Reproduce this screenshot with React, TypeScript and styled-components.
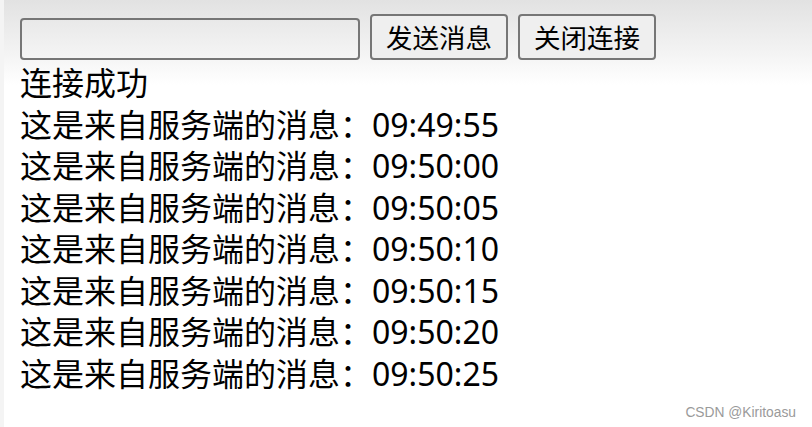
import styled, { createGlobalStyle } from 'styled-components';

const GlobalStyle = createGlobalStyle`
  html, body {
    margin: 0;
    padding: 0;
    background: #ffffff;
  }
  body {
    font-family: 'Noto Sans', 'Noto Sans CJK SC', sans-serif;
    color: #000;
  }
`;

const Page = styled.div`
  position: relative;
  width: 812px;
  height: 427px;
  box-sizing: border-box;
  padding: 14px 0 0 16px;
  overflow: hidden;
  background: linear-gradient(#e2e2e2 0px, #f4f4f4 55px, #ffffff 85px);
  border-left: 4px solid #f4f4f4;
`;

const Toolbar = styled.div`
  display: flex;
  align-items: flex-end;
  gap: 10px;
`;

const MessageInput = styled.input`
  box-sizing: border-box;
  width: 340px;
  height: 42px;
  margin: 0;
  padding: 2px 4px;
  border: 2px solid #767676;
  border-radius: 4px;
  background: transparent;
  font-size: 26px;
  font-family: inherit;
  outline: none;
`;

const ActionButton = styled.button`
  box-sizing: border-box;
  height: 46px;
  width: 138px;
  margin: 0;
  padding: 0;
  border: 2px solid #767676;
  border-radius: 4px;
  background: #efefef;
  color: #000;
  font-family: 'Noto Sans CJK SC', sans-serif;
  font-size: 26.5px;
  line-height: 40px;
`;

const MessageList = styled.div`
  margin-top: 2px;
  font-family: 'Noto Sans', 'Noto Sans CJK SC', sans-serif;
  font-size: 32px;
  line-height: 41.5px;
`;

const MessageLine = styled.div`
  white-space: nowrap;
`;

const Watermark = styled.div`
  position: absolute;
  right: 16px;
  bottom: 7px;
  font-family: 'Liberation Sans', Arial, sans-serif;
  font-size: 13.8px;
  color: #9a9a9a;
  white-space: nowrap;
`;

const times = ['09:49:55', '09:50:00', '09:50:05', '09:50:10', '09:50:15', '09:50:20', '09:50:25'];

export default function App() {
  return (
    <>
      <GlobalStyle />
      <Page>
        <Toolbar>
          <MessageInput type="text" />
          <ActionButton>发送消息</ActionButton>
          <ActionButton>关闭连接</ActionButton>
        </Toolbar>
        <MessageList>
          <MessageLine>连接成功</MessageLine>
          {times.map((t) => (
            <MessageLine key={t}>这是来自服务端的消息：{t}</MessageLine>
          ))}
        </MessageList>
        <Watermark>CSDN @Kiritoasu</Watermark>
      </Page>
    </>
  );
}
